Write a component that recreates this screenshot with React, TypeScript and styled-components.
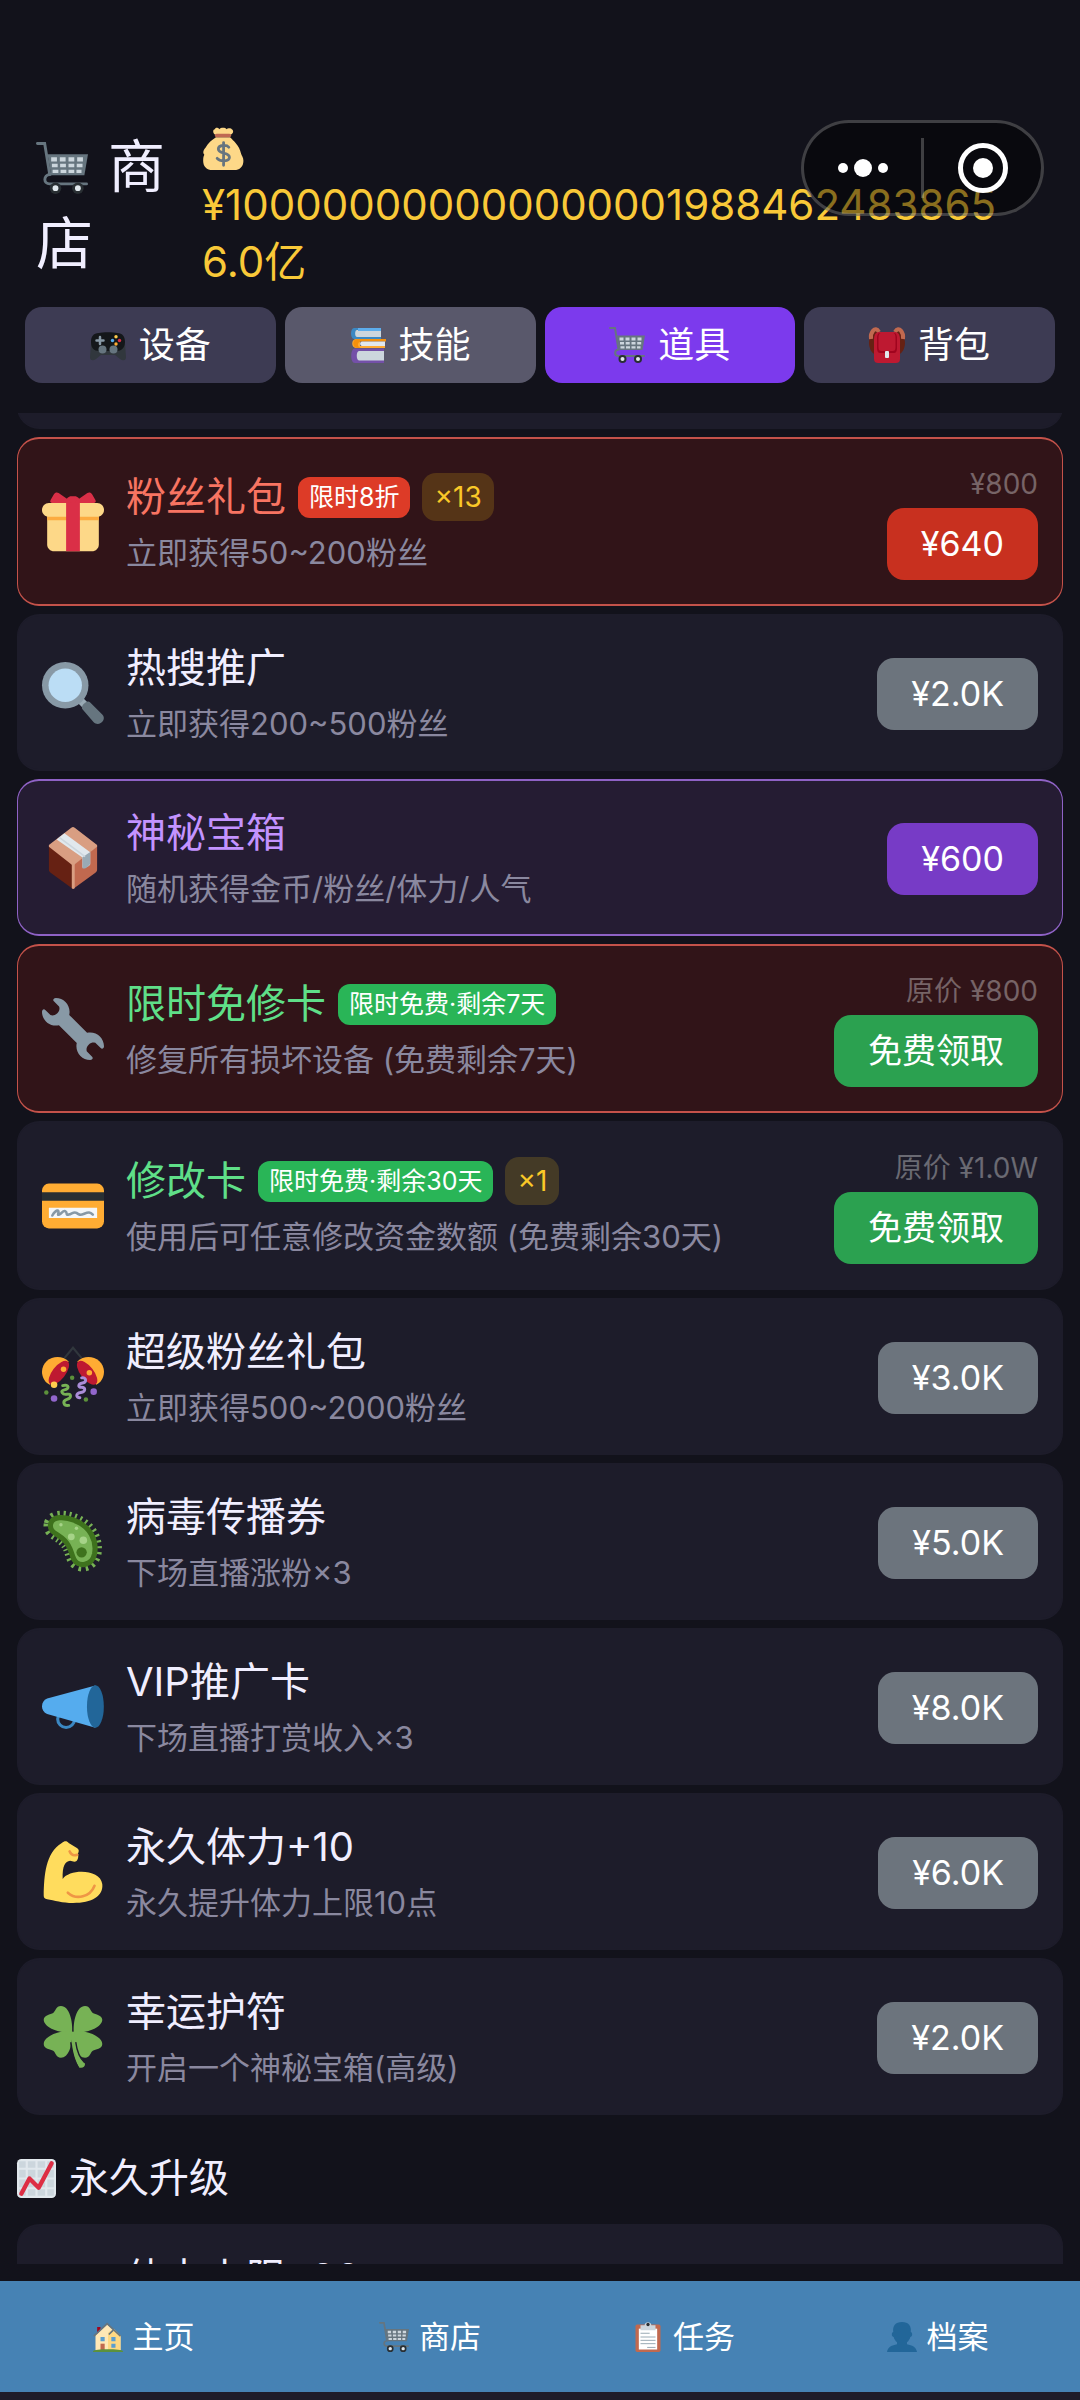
import React from 'react';
import styled, { createGlobalStyle, css } from 'styled-components';

type Tone = 'plain' | 'sale' | 'rare';
type NameColor = 'plain' | 'sale' | 'rare' | 'free';
type ButtonKind = 'grey' | 'red' | 'purple' | 'green';

type ItemTypes = {
  icon: IconName;
  name: string;
  desc: string;
  price: string;
  /**
   * Frame and background of the card.
   */
  tone?: Tone;
  nameColor?: NameColor;
  button?: ButtonKind;
  badge?: string;
  /**
   * How many the player already owns.
   */
  owned?: number;
  oldPrice?: string;
};

/* ---------- icons ---------- */

const icons = {
  cart: (
    <>
      <path d="M1 1h5l3.500 21.500C5 23 5 29 9.500 29H35" fill="none" stroke="#66757f" strokeWidth="2" strokeLinecap="round" />
      <path d="M8 8.500h28L33.500 23H10.500z" fill="#66757f" />
      <path
        d="M10.500 10.500h4v3h-4zM16.500 10.500h4v3h-4zM22.500 10.500h4v3h-4zM28.500 10.500h4v3h-4zM11 15h4v2.500h-4zM16.700 15h4v2.500h-4zM22.500 15h4v2.500h-4zM28.200 15h4v2.500h-4zM11.500 19.200h4v2.300h-4zM17 19.200h4v2.300h-4zM22.500 19.200h4v2.300h-4zM28 19.200h3.500v2.300h-3.500z"
        fill="#ccd6dd"
      />
      <circle cx="13.500" cy="32" r="4" fill="#292f33" />
      <circle cx="29" cy="32" r="4" fill="#292f33" />
      <circle cx="13.500" cy="32" r="2" fill="#e1e8ed" />
      <circle cx="29" cy="32" r="2" fill="#e1e8ed" />
    </>
  ),
  money: (
    <>
      <path
        d="M24 8c3 3 8 7 9.500 14 .5 2 2 3 2 6 0 5-3 8-8 8H9c-5 0-8-3-8-8 0-3 .5-4 1-5-2-2 0-5 1-6C5 13 9 10 12 8z"
        fill="#fdd888"
      />
      <path d="M12 6c-3-1-3-5-1-5 1-2 3-1 4 0 1-1.500 5-1.500 6 0 1-1 4-1 4.500 0 2 1 1.500 4-1.500 5z" fill="#fdd888" />
      <rect x="11" y="5" width="14" height="3" rx="1.500" fill="#bf6952" />
      <path
        d="M23 16.500c-1.500-2-9-2.500-9 1.500 0 4.500 9.500 2.500 9.500 7 0 4-8 4-10.500 1M18.500 12.500V32"
        fill="none"
        stroke="#67757f"
        strokeWidth="2.400"
        strokeLinecap="round"
      />
    </>
  ),
  gamepad: (
    <>
      <path d="M1 17L0 30c0 4 3 4 6 2l5-4h14l5 4c3 2 6 2 6-2l-1-13z" fill="#31373d" />
      <path d="M9 6c3-1 15-1 18 0 6 0 8 4 8 9 0 6-4 9-8 9H9c-5 0-8-3-8-9 0-5 2-9 8-9z" fill="#14171a" />
      <path d="M10 10v7M6.500 13.500h7" stroke="#8899a6" strokeWidth="2.500" strokeLinecap="round" />
      <circle cx="12.500" cy="22.500" r="4" fill="#66757f" />
      <circle cx="23.500" cy="22.500" r="4" fill="#66757f" />
      <circle cx="26" cy="9.800" r="1.700" fill="#ffcc4d" />
      <circle cx="22.500" cy="13.500" r="1.700" fill="#55acee" />
      <circle cx="29.500" cy="13.500" r="1.700" fill="#dd2e44" />
      <circle cx="26" cy="17" r="1.700" fill="#ffac33" />
    </>
  ),
  books: (
    <>
      <path d="M4 1h26v2H6v7h25v2H4C0 12 0 1 4 1z" fill="#3b88c3" />
      <path d="M7 3h24v7H7C4.500 10 4.500 3 7 3z" fill="#ccd6dd" />
      <path d="M31 1H8v3h23z" fill="#5dadec" />
      <path d="M6 12h30v2H10v5h25v2H6c-5 0-5-9 0-9z" fill="#ffac33" />
      <path d="M36 12H7c-5 0-5 9 0 9h4c-4-1-4-6 0-6.500h25z" fill="#f4900c" />
      <path d="M12 14.500h23v4.500H12c-2.500 0-2.500-4.500 0-4.500z" fill="#e1e8ed" />
      <path d="M5 21.500h29v3H9v8.500h25v3H5c-5 0-5-14.500 0-14.500z" fill="#7450a8" />
      <path d="M9 24h25v9.500H9c-3 0-3-9.500 0-9.500z" fill="#ccd6dd" />
    </>
  ),
  backpack: (
    <>
      <path d="M8 5C4 1 0 9 0 16c0 5 3 11 6 11M28 5c4-4 8 4 8 11 0 5-3 11-6 11" fill="#662113" />
      <path d="M10 5C6-2 1 6 2 12M26 5c4-7 9 1 8 7" fill="none" stroke="#c1694f" strokeWidth="4" />
      <path d="M10 5h16c4 0 5 4 5 8v19c0 3-2 4-4 4H9c-2 0-4-1-4-4V13c0-4 1-8 5-8z" fill="#be1931" />
      <path d="M11 6h14c2 0 3 2 3 5v10c0 3-1 5-3 5H11c-2 0-3-2-3-5V11c0-3 1-5 3-5z" fill="#a0041e" />
      <path d="M12 6h12c2 0 2.500 2 2.500 5v9c0 3-1 4-3 4h-11c-2 0-3-1-3-4v-9c0-3 .5-5 2.500-5z" fill="#be1931" />
      <rect x="16" y="24" width="4" height="7" rx="1" fill="#e1e8ed" />
    </>
  ),
  gift: (
    <>
      <path d="M33 31c0 2.200-1.800 4-4 4H7c-2.200 0-4-1.800-4-4V14c0-2.200 1.800-4 4-4h22c2.200 0 4 1.800 4 4v17z" fill="#fdd888" />
      <path d="M36 11c0 2.200-1.800 4-4 4H4c-2.200 0-4-1.800-4-4s1.800-4 4-4h28c2.200 0 4 1.800 4 4z" fill="#fdd888" />
      <path d="M3 15h30v2H3z" fill="#fcab40" />
      <path d="M19 3h-2c-1.657 0-3 1.343-3 3v29h8V6c0-1.657-1.343-3-3-3z" fill="#da2f47" />
      <path
        d="M16 7c1.100 0 1.263-.516.361-1.147L9.639 1.147c-.902-.631-2.085-.366-2.631.589L4.992 5.264C4.446 6.219 4.900 7 6 7h10zm4 0c-1.100 0-1.263-.516-.361-1.147l6.723-4.706c.901-.631 2.085-.366 2.631.589l2.016 3.527C31.554 6.219 31.100 7 30 7H20z"
        fill="#da2f47"
      />
    </>
  ),
  search: (
    <>
      <path d="M21 24l3-3 4 4-3 3z" fill="#99aab5" />
      <path d="M23.500 27.500c-1.500-1.500 2.500-6 4.500-4l7 7c3 3-2 7.500-5 4.500z" fill="#66757f" />
      <circle cx="13.500" cy="13.500" r="13.500" fill="#8899a6" />
      <circle cx="13.500" cy="13.500" r="9.700" fill="#bbddf5" />
    </>
  ),
  parcel: (
    <>
      <path d="M4 11l14 11v14L5 26.500c-.7-.5-1-1-1-2z" fill="#662113" />
      <path d="M32 11L18 22v14l13-9.500c.7-.5 1-1 1-2z" fill="#c1694f" />
      <path d="M17 .5c.7-.6 1.300-.6 2 0L32 10.500v1L18.500 22h-1L4 11.500v-1z" fill="#d99e82" />
      <path d="M17.300 21.500h1.700V35.500l-1 .5-.7-.5z" fill="#d99e82" />
      <path d="M8.500 7.200L13 3.700l15 11v7c0 1-4.500 3-4.500 1.500v-5.500z" fill="#e1e8ed" />
      <path d="M23.500 17.500L28 14.500v6.500c0 1.500-4.500 4.500-4.500 2.500z" fill="#99aab5" />
      <path d="M10 6l15 11.200" stroke="#ccd6dd" strokeWidth="1" />
    </>
  ),
  wrench: (
    <path
      d="M27.989 19.977c-.622 0-1.225.078-1.806.213L15.811 9.818c.134-.581.212-1.184.212-1.806C16.023 3.587 12.436 0 8.012 0 7.110 0 5.910.916 6.909 1.915l2.997 2.997s.999 1.998-.999 3.995-3.996.998-3.996.998L1.915 6.909C.916 5.910 0 7.105 0 8.012c0 4.425 3.587 8.012 8.012 8.012.622 0 1.225-.078 1.806-.212l10.371 10.371c-.135.581-.213 1.184-.213 1.806 0 4.425 3.588 8.011 8.012 8.011.901 0 2.101-.916 1.102-1.915l-2.997-2.997s-.999-1.998.999-3.995 3.995-.999 3.995-.999l2.997 2.997c1 .999 1.916-.196 1.916-1.102 0-4.425-3.587-8.012-8.011-8.012z"
      fill="#8899a6"
    />
  ),
  card: (
    <>
      <rect y="5" width="36" height="26" rx="4" fill="#ffac33" />
      <path d="M0 10h36v5H0z" fill="#292f33" />
      <path d="M4 19h28v6H4z" fill="#f4f7f9" />
      <path
        d="M6 23.500c1-2 3-3.500 3.500-2.500s-1 2.500.5 2 2-2.500 3.500-2 0 2.500 2 2 3-2 4.500-1 2 1.500 4.500.5 3.500-1 5 .5"
        fill="none"
        stroke="#8899a6"
        strokeWidth="1.500"
        strokeLinecap="round"
      />
    </>
  ),
  confetti: (
    <>
      <path d="M13 7l5-6 5 6" fill="none" stroke="#31373d" strokeWidth="1.200" />
      <path d="M15.500 9C10 3.500 0 7 0 15c0 3.500 2 6.500 4.500 7.500z" fill="#ffac33" />
      <path d="M20.500 9C26 3.500 36 7 36 15c0 3.500-2 6.500-4.500 7.500z" fill="#ffac33" />
      <ellipse cx="9.800" cy="15.500" rx="3.800" ry="8.300" fill="#be1931" transform="rotate(38 9.800 15.500)" />
      <ellipse cx="26.200" cy="15.500" rx="3.800" ry="8.300" fill="#be1931" transform="rotate(-38 26.200 15.500)" />
      <circle cx="12.500" cy="13.500" r="1.600" fill="#ffac33" />
      <circle cx="27.500" cy="15.500" r="1.600" fill="#ffac33" />
      <circle cx="7" cy="22.500" r="1.900" fill="#ffcc4d" />
      <circle cx="2.500" cy="27" r="1.300" fill="#5c913b" />
      <circle cx="17.500" cy="18.500" r="1.300" fill="#5c913b" />
      <circle cx="25.500" cy="31" r="1.300" fill="#5c913b" />
      <circle cx="7" cy="30.500" r="1.900" fill="#9266cc" />
      <circle cx="30" cy="26.500" r="1.900" fill="#9266cc" />
      <path d="M12 23c4-1 4 2 1 2.500s-1 3 1.500 2.500 3 2 0 3-2 4 1 3.500" fill="none" stroke="#77b255" strokeWidth="1.700" strokeLinecap="round" />
      <path d="M23 18.500c3-.5 3 2.500.5 3s-3 2.500-.5 2.500 2.500 2.500-.5 3-3 3-.5 3" fill="none" stroke="#aa8dd8" strokeWidth="1.700" strokeLinecap="round" />
    </>
  ),
  microbe: (
    <>
      <path
        d="M5 7.500C6 3 13 3 19 5.500 28 9 32 17 30.500 25 29 32 21 33 18.500 28 16.500 24 17 21 13 17 9 13 4 12.500 5 7.500z"
        fill="none"
        stroke="#77b255"
        strokeWidth="8"
        strokeDasharray="1.100 1.900"
      />
      <path
        d="M5 7.500C6 3 13 3 19 5.500 28 9 32 17 30.500 25 29 32 21 33 18.500 28 16.500 24 17 21 13 17 9 13 4 12.500 5 7.500z"
        fill="#77b255"
        stroke="#3e721d"
        strokeWidth="3"
      />
      <circle cx="11" cy="8" r="1" fill="#a6d388" />
      <circle cx="20" cy="10" r="1" fill="#a6d388" />
      <circle cx="17" cy="15" r="2" fill="#a6d388" />
      <circle cx="24" cy="17" r="2.200" fill="#a6d388" />
      <circle cx="23" cy="24" r="3" fill="#3e721d" />
    </>
  ),
  megaphone: (
    <>
      <circle cx="14" cy="25" r="4.900" fill="none" stroke="#3b88c3" strokeWidth="1.800" />
      <path d="M31 5.500v24.500L3 22c-4-1.500-4-7.500 0-9z" fill="#55acee" />
      <ellipse cx="31" cy="17.700" rx="4.900" ry="12.300" fill="#226699" />
    </>
  ),
  muscle: (
    <>
      <path
        d="M11.500 1.200c1.500-1.500 3-1.500 4 0l5 3c1.200.8 1 2 .3 3.300.7 1.500 0 4.500-2 4.500l-2.500-.5C13.500 12 11.800 14 12 22c4-6 22-6 23 3 .8 7-6 11-17 11-6 0-11-1.500-15-2.200-1.500-.2-2-.8-2-2C1.200 20 2 7 11.500 1.200z"
        fill="#ffdc5d"
      />
      <path d="M15 30c5 4.500 13 2.500 15.500-4M16 6c1 2.500 3 2.500 4.500 2" fill="none" stroke="#ef9645" strokeWidth="1.500" strokeLinecap="round" />
    </>
  ),
  clover: (
    <>
      <path d="M17.500 15.500C18 9 16 0 11 0 8 0 8 3 6.500 4 5 5 1 5 1 8c0 4 8 8 16.500 7.500z" fill="#77b255" />
      <path d="M18.500 15.500C18 9 20 0 25 0c3 0 3 3 4.500 4C31 5 35 5 35 8c0 4-8 8-16.500 7.500z" fill="#77b255" />
      <path d="M17.500 14.500c.5 6.500-1.500 15.500-6.500 15.500-3 0-3-3-4.500-4C5 25 1 25 1 22c0-4 8-8 16.500-7.500z" fill="#77b255" />
      <path d="M18.500 14.500C18 21 20 30 25 30c3 0 3-3 4.500-4 1.500-1 5.500-1 5.500-4 0-4-8-8-16.500-7.500z" fill="#77b255" />
      <path d="M17 15h2c0 8 2 13 6 18.500 0 2-1.500 2.800-3.500 2.200C18.500 30 17 24 17 15z" fill="#77b255" />
      <path d="M16.700 21c.3 6 1.800 11 4.500 15M19.600 21c.5 4 2 9 5.200 12" fill="none" stroke="#1d1c2a" strokeWidth=".8" />
    </>
  ),
  chart: (
    <>
      <rect width="36" height="36" rx="4" fill="#e1e8ed" />
      <path
        d="M2 2h6v6H2zM10 2h7v6h-7zM19 2h7v6h-7zM28 2h6v6h-6zM2 10h6v7H2zM10 10h7v7h-7zM19 10h7v7h-7zM28 10h6v7h-6zM2 19h6v7H2zM10 19h7v7h-7zM19 19h7v7h-7zM28 19h6v7h-6zM2 28h6v6H2zM10 28h7v6h-7zM19 28h7v6h-7zM28 28h6v6h-6z"
        fill="#ccd6dd"
      />
      <path d="M4 32l7.500-14 8.500 8.500L32 4" fill="none" stroke="#dd2e44" strokeWidth="4" strokeLinecap="round" strokeLinejoin="round" />
    </>
  ),
  house: (
    <>
      <path d="M5 6h4v8H5z" fill="#a0041e" />
      <path d="M3 16L17 3l16 14v17H3z" fill="#ffe8b6" />
      <path d="M18 13l7-5 8 8v18H18z" fill="#ffd983" />
      <path d="M1 17L17 2l16 15M19 15l5-5" fill="none" stroke="#66757f" strokeWidth="2" />
      <path d="M9 18h5v5H9zM22 18h5v5h-5zM22 26h5v5h-5z" fill="#5c9fd0" />
      <path d="M9 26h5v8H9z" fill="#c1694f" />
      <path d="M0 35c1-3 35-3 36 0v1H0z" fill="#5c913b" />
    </>
  ),
  clipboard: (
    <>
      <rect x="3" y="3" width="30" height="33" rx="2" fill="#c1694f" />
      <path d="M7 8h22v25H7z" fill="#fff" />
      <path d="M9 13.500h11M9 18h18M9 22h18M9 26h18M17 30.500h10" stroke="#99aab5" strokeWidth="1.200" />
      <path d="M9 4h5c0-5 8-5 8 0h5v6H9z" fill="#ccd6dd" />
      <circle cx="18" cy="3" r="2" fill="#292f33" />
    </>
  ),
  person: (
    <path
      d="M24 26.800v-2.600c2-1.600 3.500-4 4-6.300 1 0 2.200-1.200 2.200-3s-.7-2.700-1.700-3C29.500 5 26 0 18 0S6.500 5 7.500 11.900c-1 .3-1.700 1.200-1.700 3s1.200 3 2.200 3c.5 2.300 2 4.700 4 6.300v2.600C6 28 1 30 0 36h36c-1-6-6-8-12-9.200z"
      fill="#226699"
    />
  ),
};

type IconName = keyof typeof icons;

const Svg = styled.svg<{ $size: number }>`
  flex: none;
  width: ${({ $size }) => $size}px;
  height: ${({ $size }) => $size}px;
  overflow: visible;
`;

const InlineSvg = styled(Svg)`
  margin: 0 4px 6px 0;
  vertical-align: middle;
`;

const Icon: React.FC<{ name: IconName; size: number; inline?: boolean }> = ({ name, size, inline }) => {
  const Root = inline ? InlineSvg : Svg;
  return (
    <Root $size={size} viewBox="0 0 36 36" aria-hidden="true">
      {icons[name]}
    </Root>
  );
};

/* ---------- layout ---------- */

const GlobalStyle = createGlobalStyle`
  * {
    box-sizing: border-box;
  }
  body {
    margin: 0;
    background: #12121b;
    color: #f0eeff;
    font-family: Inter, 'Noto Sans CJK SC', sans-serif;
  }
  button {
    border: 0;
    color: #fff;
    font-family: inherit;
    line-height: 48px;
    cursor: pointer;
  }
`;

const Screen = styled.div`
  position: relative;
  display: flex;
  flex-direction: column;
  height: 100vh;
  padding-top: 119px;
`;

const Header = styled.header`
  display: flex;
  align-items: center;
  gap: 16px;
  padding: 0 72px 0 36px;
`;

const Title = styled.h1`
  flex: 0 0 150px;
  margin: 0;
  font-size: 57px;
  font-weight: 400;
  line-height: 77px;
`;

const Money = styled.div`
  flex: 1;
  min-width: 0;
  color: #f9c938;
  font-size: 42px;
  line-height: 57px;
  overflow-wrap: anywhere;
`;

const Capsule = styled.div`
  position: absolute;
  top: 120px;
  right: 36px;
  display: flex;
  align-items: center;
  width: 243px;
  height: 96px;
  border: 3px solid rgba(255, 255, 255, 0.22);
  border-radius: 48px;
  background: rgba(0, 0, 0, 0.45);
`;

const CapsuleButton = styled.button`
  display: flex;
  flex: 1;
  align-items: center;
  justify-content: center;
  padding: 0;
  background: none;
`;

const CapsuleLine = styled.span`
  width: 3px;
  height: 60px;
  background: rgba(255, 255, 255, 0.22);
`;

const Tabs = styled.div`
  display: grid;
  grid-template-columns: repeat(4, 1fr);
  gap: 9px;
  padding: 17px 25px 30px;
`;

const Tab = styled.button<{ $background: string }>`
  display: flex;
  align-items: center;
  justify-content: center;
  gap: 13px;
  height: 76px;
  padding: 0;
  border-radius: 17px;
  background: ${({ $background }) => $background};
  font-size: 36px;
`;

const List = styled.main`
  display: flex;
  flex: 1;
  flex-direction: column;
  gap: 8px;
  min-height: 0;
  margin-bottom: 17px;
  padding: 0 17px;
  overflow: hidden;
`;

const tones = {
  plain: css`
    border-color: #1d1c2a;
    background: #1d1c2a;
  `,
  sale: css`
    border-color: #c4524a;
    background: #311418;
  `,
  rare: css`
    border-color: #8f62c6;
    background: #251c33;
  `,
};

const Card = styled.article<{ $tone?: Tone }>`
  display: flex;
  flex: none;
  align-items: center;
  gap: 22px;
  min-height: 157px;
  padding: 24px;
  border-style: solid;
  border-width: 2px 1px;
  border-radius: 22px;
  ${({ $tone = 'plain' }) => tones[$tone]}
`;

/* The card that is already scrolled past, only its lower edge stays in view. */
const PassedCard = styled(Card)`
  margin-top: -141px;
`;

const Info = styled.div`
  flex: 1;
  min-width: 0;
`;

const NameRow = styled.div`
  display: flex;
  align-items: center;
  gap: 12px;
  margin-bottom: 7px;
`;

const nameColors = { plain: '#f0eeff', sale: '#f87462', rare: '#c393ff', free: '#5fdf88' };

const Name = styled.h2<{ $color: NameColor }>`
  margin: 0;
  color: ${({ $color }) => nameColors[$color]};
  font-size: 40px;
  font-weight: 400;
  line-height: 56px;
`;

const Badge = styled.span<{ $free: boolean }>`
  padding: 0 11px;
  border-radius: 12px;
  background: ${({ $free }) => ($free ? '#29b557' : '#dd3b27')};
  color: #fff;
  font-size: 25px;
  line-height: 41px;
`;

const Owned = styled.span`
  padding: 0 12px;
  border-radius: 14px;
  background: rgba(250, 200, 20, 0.18);
  color: #fac828;
  font-size: 28px;
  line-height: 48px;
`;

const Desc = styled.p`
  min-height: 42px;
  margin: 0;
  color: #8a889f;
  font-size: 31px;
  line-height: 42px;
`;

const Side = styled.div`
  display: flex;
  flex-direction: column;
  align-items: flex-end;
`;

const OldPrice = styled.span`
  color: rgba(255, 255, 255, 0.34);
  font-size: 28px;
  line-height: 43px;
`;

const buttonColors = { grey: '#6c747d', red: '#c8301f', purple: '#773bc6', green: '#2ba150' };

const Buy = styled.button<{ $kind: ButtonKind }>`
  height: 72px;
  margin-top: 2px;
  padding: 0 34px;
  border-radius: 17px;
  background: ${({ $kind }) => buttonColors[$kind]};
  font-size: 34px;
`;

const SectionTitle = styled.h2`
  display: flex;
  align-items: center;
  gap: 13px;
  margin: 0;
  padding: 27px 0 10px;
  font-size: 40px;
  font-weight: 400;
  line-height: 56px;
`;

const Nav = styled.nav`
  display: grid;
  flex: none;
  grid-template-columns: 287fr 286fr 222fr 285fr;
  height: 119px;
  border-bottom: 8px solid #1e1c2a;
  background: #4682b4;
`;

const NavButton = styled.button`
  display: flex;
  align-items: center;
  justify-content: center;
  gap: 10px;
  padding: 0;
  background: none;
  font-size: 31px;
`;

/* ---------- data ---------- */

const tabs: { icon: IconName; label: string; background: string }[] = [
  { icon: 'gamepad', label: '设备', background: '#3d3b53' },
  { icon: 'books', label: '技能', background: '#59586b' },
  { icon: 'cart', label: '道具', background: '#7c3aed' },
  { icon: 'backpack', label: '背包', background: '#3d3b53' },
];

const items: ItemTypes[] = [
  {
    icon: 'gift',
    name: '粉丝礼包',
    desc: '立即获得50~200粉丝',
    price: '¥640',
    tone: 'sale',
    nameColor: 'sale',
    button: 'red',
    badge: '限时8折',
    owned: 13,
    oldPrice: '¥800',
  },
  { icon: 'search', name: '热搜推广', desc: '立即获得200~500粉丝', price: '¥2.0K' },
  {
    icon: 'parcel',
    name: '神秘宝箱',
    desc: '随机获得金币/粉丝/体力/人气',
    price: '¥600',
    tone: 'rare',
    nameColor: 'rare',
    button: 'purple',
  },
  {
    icon: 'wrench',
    name: '限时免修卡',
    desc: '修复所有损坏设备 (免费剩余7天)',
    price: '免费领取',
    tone: 'sale',
    nameColor: 'free',
    button: 'green',
    badge: '限时免费·剩余7天',
    oldPrice: '原价 ¥800',
  },
  {
    icon: 'card',
    name: '修改卡',
    desc: '使用后可任意修改资金数额 (免费剩余30天)',
    price: '免费领取',
    nameColor: 'free',
    button: 'green',
    badge: '限时免费·剩余30天',
    owned: 1,
    oldPrice: '原价 ¥1.0W',
  },
  { icon: 'confetti', name: '超级粉丝礼包', desc: '立即获得500~2000粉丝', price: '¥3.0K' },
  { icon: 'microbe', name: '病毒传播券', desc: '下场直播涨粉×3', price: '¥5.0K' },
  { icon: 'megaphone', name: 'VIP推广卡', desc: '下场直播打赏收入×3', price: '¥8.0K' },
  { icon: 'muscle', name: '永久体力+10', desc: '永久提升体力上限10点', price: '¥6.0K' },
  { icon: 'clover', name: '幸运护符', desc: '开启一个神秘宝箱(高级)', price: '¥2.0K' },
];

const pages: { icon: IconName; label: string }[] = [
  { icon: 'house', label: '主页' },
  { icon: 'cart', label: '商店' },
  { icon: 'clipboard', label: '任务' },
  { icon: 'person', label: '档案' },
];

const ShopItem: React.FC<ItemTypes> = ({
  icon,
  name,
  desc,
  price,
  tone = 'plain',
  nameColor = 'plain',
  button = 'grey',
  badge,
  owned,
  oldPrice,
}) => (
  <Card $tone={tone}>
    <Icon name={icon} size={62} />
    <Info>
      <NameRow>
        <Name $color={nameColor}>{name}</Name>
        {badge && <Badge $free={nameColor === 'free'}>{badge}</Badge>}
        {owned && <Owned>×{owned}</Owned>}
      </NameRow>
      <Desc>{desc}</Desc>
    </Info>
    <Side>
      {oldPrice && <OldPrice>{oldPrice}</OldPrice>}
      <Buy type="button" $kind={button}>
        {price}
      </Buy>
    </Side>
  </Card>
);

const App: React.FC = () => (
  <>
    <GlobalStyle />
    <Screen>
      <Header>
        <Title>
          <Icon name="cart" size={52} inline /> 商店
        </Title>
        <Money>
          <Icon name="money" size={42} inline /> ¥1000000000000000019884624838656.0亿
        </Money>
      </Header>
      <Capsule>
        <CapsuleButton type="button" aria-label="更多">
          <svg width="52" height="20" viewBox="0 0 52 20" fill="#fff">
            <circle cx="6" cy="10" r="5" />
            <circle cx="26" cy="10" r="9" />
            <circle cx="46" cy="10" r="5" />
          </svg>
        </CapsuleButton>
        <CapsuleLine />
        <CapsuleButton type="button" aria-label="关闭">
          <svg width="52" height="52" viewBox="0 0 52 52">
            <circle cx="26" cy="26" r="22.500" fill="none" stroke="#fff" strokeWidth="5" />
            <circle cx="26" cy="26" r="10" fill="#fff" />
          </svg>
        </CapsuleButton>
      </Capsule>
      <Tabs>
        {tabs.map(({ icon, label, background }) => (
          <Tab key={label} type="button" $background={background}>
            <Icon name={icon} size={36} />
            {label}
          </Tab>
        ))}
      </Tabs>
      <List>
        <PassedCard />
        {items.map((item) => (
          <ShopItem key={item.name} {...item} />
        ))}
        <SectionTitle>
          <Icon name="chart" size={39} />
          永久升级
        </SectionTitle>
        <Card>
          <Icon name="muscle" size={62} />
          <Info>
            <NameRow>
              <Name $color="plain">体力上限+20</Name>
            </NameRow>
            <Desc />
          </Info>
        </Card>
      </List>
      <Nav>
        {pages.map(({ icon, label }) => (
          <NavButton key={label} type="button">
            <Icon name={icon} size={30} />
            {label}
          </NavButton>
        ))}
      </Nav>
    </Screen>
  </>
);

export default App;
